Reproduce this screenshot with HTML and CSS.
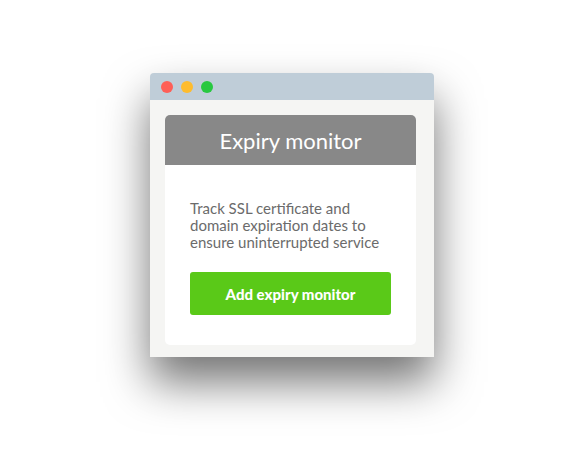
FILE: index.html
```html
<!DOCTYPE html>
<html>
<head>
<meta charset="utf-8">
<link rel="stylesheet" href="styles.css">
</head>
<body>
<div class="window">
  <div class="titlebar">
    <span class="dot red"></span>
    <span class="dot yellow"></span>
    <span class="dot green"></span>
  </div>
  <div class="content">
    <div class="card">
      <div class="card-header">Expiry monitor</div>
      <div class="card-body">
        <p class="desc">Track SSL certificate and domain expiration dates to ensure uninterrupted service</p>
        <button class="btn">Add expiry monitor</button>
      </div>
    </div>
  </div>
</div>
</body>
</html>
```
FILE: styles.css
```css
html, body {
  margin: 0;
  padding: 0;
  background: #ffffff;
}
body {
  width: 584px;
  height: 457px;
  overflow: hidden;
  font-family: "Lato", "Open Sans", sans-serif;
}
.window {
  margin: 73px 0 0 150px;
  width: 284px;
  background: #f5f5f3;
  border-radius: 4px 4px 0 0;
  box-shadow: 0 25px 45px rgba(0, 0, 0, 0.55);
}
.titlebar {
  height: 27px;
  background: #bfcdd8;
  border-radius: 4px 4px 0 0;
  display: flex;
  align-items: center;
  padding-left: 11px;
  gap: 8px;
}
.dot {
  width: 12px;
  height: 12px;
  border-radius: 50%;
  display: block;
}
.red { background: #fe5f57; }
.yellow { background: #febc2e; }
.green { background: #28c840; }
.content {
  padding: 15px 18px 12px 15px;
}
.card {
  background: #ffffff;
  border-radius: 5px;
  overflow: hidden;
}
.card-header {
  height: 50px;
  background: #888888;
  color: #ffffff;
  font-size: 22px;
  display: flex;
  align-items: center;
  justify-content: center;
}
.card-body {
  padding: 35px 25px 30px 25px;
}
.desc {
  margin: 0 0 21px 0;
  color: #6b6b6b;
  font-size: 15px;
  line-height: 17px;
}
.btn {
  display: block;
  width: 201px;
  height: 43px;
  border: none;
  border-radius: 3px;
  background: #5ac918;
  color: #ffffff;
  font-family: "Lato", "Open Sans", sans-serif;
  font-weight: 900;
  font-size: 15px;
  padding: 0;
}
```
